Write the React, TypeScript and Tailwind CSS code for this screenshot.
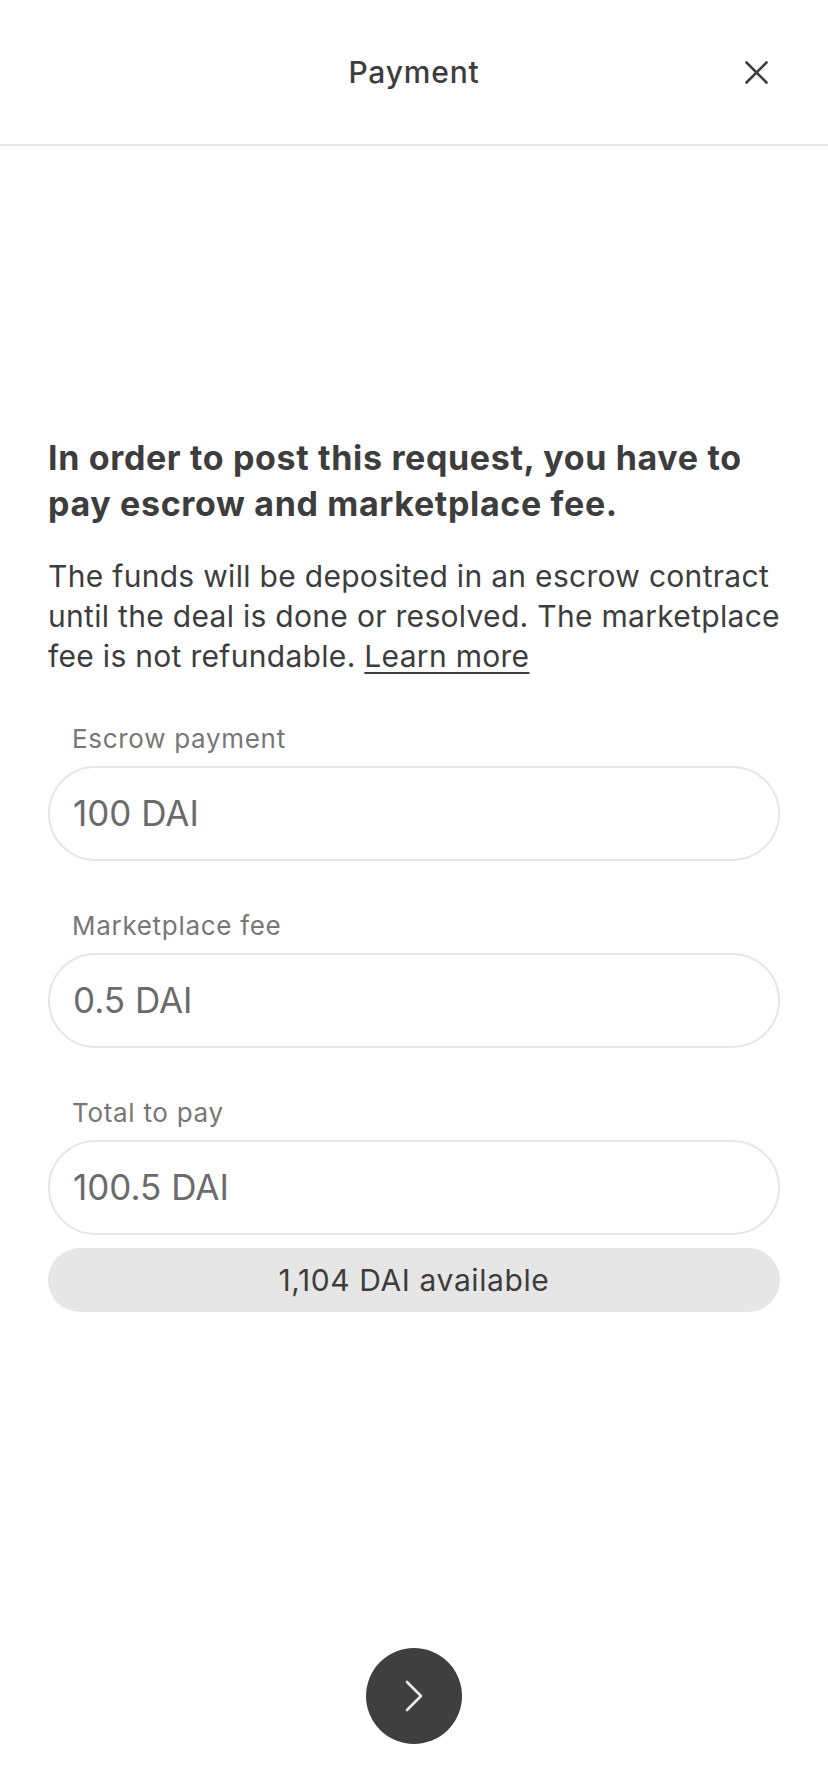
import React from 'react';

const fields = [
  { label: 'Escrow payment', value: '100 DAI' },
  { label: 'Marketplace fee', value: '0.5 DAI' },
  { label: 'Total to pay', value: '100.5 DAI' },
];

const AmountField: React.FC<{ label: string; value: string; first?: boolean }> = ({ label, value, first }) => (
  <div className={first ? '' : 'mt-[49px]'}>
    <div className="pl-6 text-[26px] leading-[32px] tracking-[0.7px] text-[#777777]">{label}</div>
    <div className="mt-[11px] h-[95px] rounded-full border-2 border-[#e6e6e6] flex items-center pl-[23px]">
      <span className="text-[35px] text-[#6b6b6b]">{value}</span>
    </div>
  </div>
);

export default function App() {
  return (
    <div className="min-h-screen flex flex-col bg-white font-['Inter','Liberation_Sans',sans-serif] text-[#3d3d3d]">
      <header className="h-[146px] border-b-2 border-[#e6e6e6] grid grid-cols-[1fr_auto_1fr] items-center">
        <div />
        <h1 className="text-[30px] font-medium tracking-[0.8px] text-[#3d3d3d]">Payment</h1>
        <div className="flex justify-end pr-[50px]">
          <button className="w-11 h-11 flex items-center justify-center" aria-label="Close">
            <svg width="23" height="23" viewBox="0 0 23 23" fill="none" stroke="#3d3d3d" strokeWidth="2.6" strokeLinecap="round">
              <path d="M1.5 1.5 L21.5 21.5 M21.5 1.5 L1.5 21.5" />
            </svg>
          </button>
        </div>
      </header>

      <main className="px-12 pt-[289px]">
        <h2 className="text-[34px] leading-[46px] font-bold tracking-[0.65px] whitespace-nowrap">
          In order to post this request, you have to<br />pay escrow and marketplace fee.
        </h2>
        <p className="mt-[29px] text-[30px] leading-[40px] tracking-[0.3px] whitespace-nowrap">
          The funds will be deposited in an escrow contract<br />
          until the deal is done or resolved. The marketplace<br />
          fee is not refundable.{' '}
          <a className="underline decoration-2 underline-offset-[5px]">Learn more</a>
        </p>

        <div className="mt-[47px]">
          {fields.map((f, i) => (
            <AmountField key={f.label} label={f.label} value={f.value} first={i === 0} />
          ))}
        </div>

        <div className="mt-[13px] h-16 rounded-full bg-[#e6e6e6] flex items-center justify-center text-[30px] tracking-[0.6px] text-[#3d3d3d]">
          1,104 DAI available
        </div>
      </main>

      <div className="flex-1" />

      <div className="flex justify-center pb-12">
        <button className="w-[96px] h-[96px] rounded-full bg-[#3f3f3f] flex items-center justify-center" aria-label="Next">
          <svg width="20" height="32" viewBox="0 0 20 32" fill="none" stroke="#ededed" strokeWidth="2.6" strokeLinecap="round" strokeLinejoin="round">
            <path d="M3 2 L17 16 L3 30" />
          </svg>
        </button>
      </div>
    </div>
  );
}
